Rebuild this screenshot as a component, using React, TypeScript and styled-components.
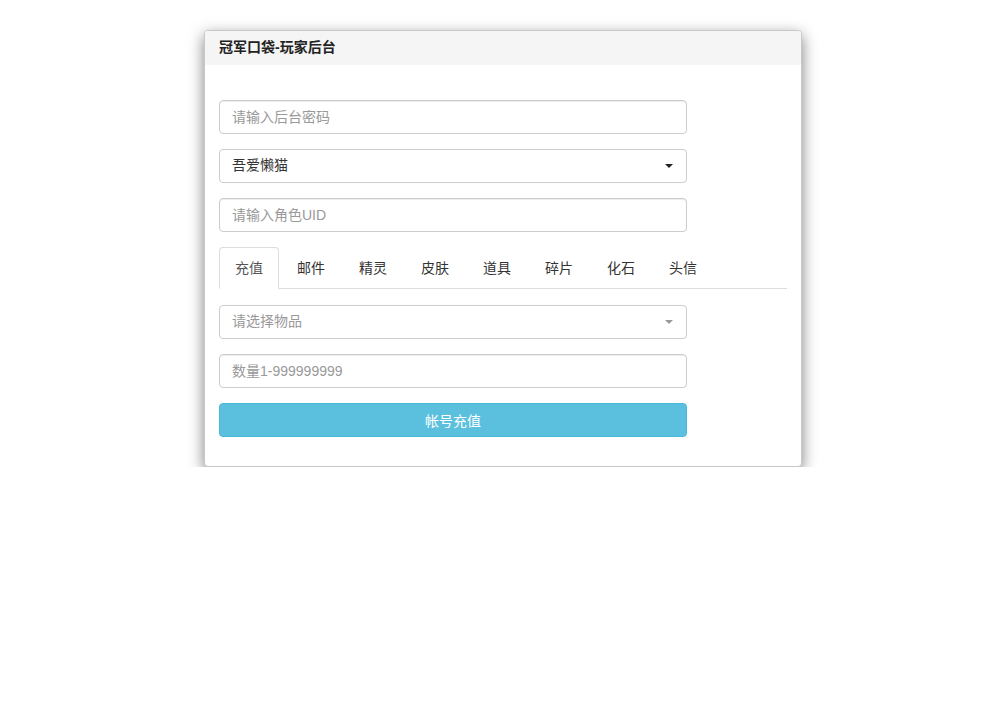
import React, { useState } from "react";
import styled, { createGlobalStyle } from "styled-components";

const GlobalStyle = createGlobalStyle`
    html, body {
        margin: 0;
        padding: 0;
        background: #fff;
    }
    body {
        font-family: "Liberation Sans", "Noto Sans CJK SC", sans-serif;
        font-size: 14px;
        color: #333;
        line-height: 1.42857;
    }
    * {
        box-sizing: border-box;
    }
`;

const Page = styled.div`
    padding: 30px 0 0 204px;
`;

const Panel = styled.div`
    width: 598px;
    background: #fff;
    border: 1px solid #c8c8c8;
    border-radius: 4px;
    box-shadow: 0 5px 15px rgba(0, 0, 0, 0.5);
    overflow: hidden;
`;

const PanelHeading = styled.div`
    height: 34px;
    padding: 0 14px;
    display: flex;
    align-items: center;
    background: #f5f5f5;
    font-size: 14px;
    font-weight: bold;
    color: #222;
`;

const PanelBody = styled.div`
    padding: 35px 14px 14px;
`;

const Field = styled.div`
    position: relative;
    width: 468px;
    margin-bottom: 15px;
`;

const Input = styled.input`
    display: block;
    width: 100%;
    height: 34px;
    padding: 6px 12px;
    font-family: inherit;
    font-size: 14px;
    color: #555;
    background: #fff;
    border: 1px solid #ccc;
    border-radius: 4px;
    box-shadow: inset 0 1px 1px rgba(0, 0, 0, 0.075);
    outline: none;

    &::placeholder {
        color: #999;
    }
`;

const SelectBox = styled.div<{ $placeholder?: boolean }>`
    display: flex;
    align-items: center;
    height: 34px;
    padding: 0 12px;
    border: 1px solid #ccc;
    border-radius: 4px;
    background: #fff;
    color: ${(p) => (p.$placeholder ? "#999" : "#333")};
    cursor: pointer;
`;

const Caret = styled.span<{ $muted?: boolean }>`
    position: absolute;
    right: 14px;
    top: 15px;
    width: 0;
    height: 0;
    border-left: 4px solid transparent;
    border-right: 4px solid transparent;
    border-top: 4px solid ${(p) => (p.$muted ? "#999" : "#222")};
`;

const Tabs = styled.ul`
    display: flex;
    list-style: none;
    margin: 0 0 16px;
    padding: 0;
    border-bottom: 1px solid #ddd;
`;

const Tab = styled.li<{ $active?: boolean }>`
    margin-right: 2px;
    margin-bottom: -1px;
    padding: 10px 15px;
    line-height: 20px;
    border: 1px solid ${(p) => (p.$active ? "#ddd" : "transparent")};
    border-bottom-color: ${(p) => (p.$active ? "#fff" : "transparent")};
    border-radius: 4px 4px 0 0;
    background: ${(p) => (p.$active ? "#fff" : "transparent")};
    color: ${(p) => (p.$active ? "#555" : "#333")};
    cursor: pointer;
`;

const Button = styled.button`
    display: block;
    width: 468px;
    height: 34px;
    margin-bottom: 15px;
    font-family: inherit;
    font-size: 14px;
    color: #fff;
    background: #5bc0de;
    border: 1px solid #46b8da;
    border-radius: 4px;
    cursor: pointer;
`;

const tabs = ["充值", "邮件", "精灵", "皮肤", "道具", "碎片", "化石", "头信"];

const App: React.FC = () => {
    const [active, setActive] = useState(0);

    return (
        <Page>
            <GlobalStyle />
            <Panel>
                <PanelHeading>冠军口袋-玩家后台</PanelHeading>
                <PanelBody>
                    <Field>
                        <Input type="password" placeholder="请输入后台密码" />
                    </Field>
                    <Field>
                        <SelectBox>吾爱懒猫</SelectBox>
                        <Caret />
                    </Field>
                    <Field>
                        <Input type="text" placeholder="请输入角色UID" />
                    </Field>
                    <Tabs>
                        {tabs.map((t, i) => (
                            <Tab key={t} $active={i === active} onClick={() => setActive(i)}>
                                {t}
                            </Tab>
                        ))}
                    </Tabs>
                    <Field>
                        <SelectBox $placeholder>请选择物品</SelectBox>
                        <Caret $muted />
                    </Field>
                    <Field>
                        <Input type="text" placeholder="数量1-999999999" />
                    </Field>
                    <Button>帐号充值</Button>
                </PanelBody>
            </Panel>
        </Page>
    );
};

export default App;
